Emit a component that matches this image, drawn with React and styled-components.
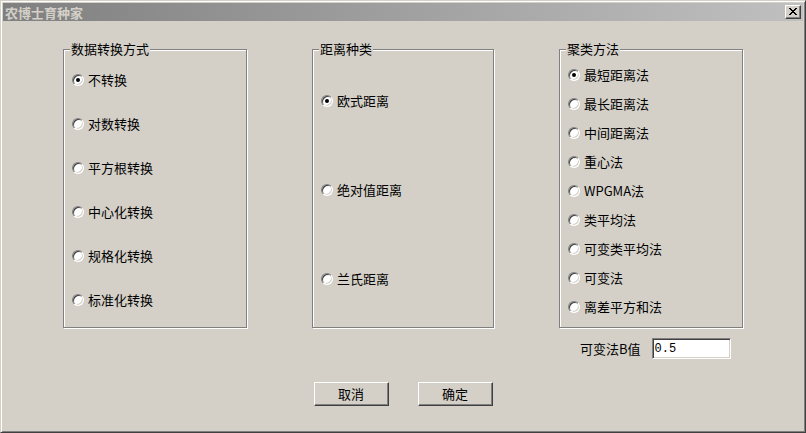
import React from "react";
import styled, { createGlobalStyle } from "styled-components";

const Global = createGlobalStyle`
  html, body { margin: 0; padding: 0; background: #d4d0c8; }
  body { font-family: "SimSun", "Noto Sans CJK SC", "Noto Sans", sans-serif; }
  * { box-sizing: border-box; }
`;

const Window = styled.div`
  width: 806px;
  height: 433px;
  background: #d4d0c8;
  border: 1px solid;
  border-color: #d4d0c8 #404040 #404040 #d4d0c8;
  box-shadow: inset 1px 1px 0 #fff, inset -1px -1px 0 #808080;
  padding: 2px;
  display: flex;
  flex-direction: column;
  font-size: 13px;
  color: #000;
`;

const TitleBar = styled.div`
  height: 18px;
  flex: none;
  display: flex;
  align-items: center;
  justify-content: space-between;
  padding: 0 2px 0 2px;
  background: linear-gradient(to right, #808080, #c0c0c0);
`;

const TitleText = styled.span`
  font-family: "Noto Sans CJK SC", sans-serif;
  font-weight: 700;
  font-size: 13px;
  line-height: 13px;
  color: #d4d0c8;
`;

const CloseBtn = styled.div`
  width: 16px;
  height: 14px;
  background: #d4d0c8;
  border: 1px solid;
  border-color: #fff #404040 #404040 #fff;
  box-shadow: inset -1px -1px 0 #808080;
  display: flex;
  align-items: center;
  justify-content: center;
  padding-bottom: 1px;
`;

const Content = styled.div`
  flex: 1;
  padding: 28px 0 0 60px;
  display: flex;
  flex-direction: column;
`;

const Columns = styled.div`
  display: grid;
  grid-template-columns: 184px 182px 184px;
  column-gap: 65px;
  align-items: start;
`;

const Column = styled.div`
  display: flex;
  flex-direction: column;
`;

const Group = styled.div`
  position: relative;
  height: 279px;
  border: 1px solid #808080;
  box-shadow: 1px 1px 0 #fff, inset 1px 1px 0 #fff;
  padding: ${(p) => p.$pad}px 0 0 8px;
  display: flex;
  flex-direction: column;
`;

const Legend = styled.span`
  position: absolute;
  top: -8px;
  left: 6px;
  padding: 0 1px;
  background: #d4d0c8;
  line-height: 14px;
  font-family: "Noto Sans CJK SC", sans-serif;
  font-size: 13px;
`;

const Row = styled.label`
  height: ${(p) => p.$h}px;
  display: flex;
  align-items: center;
  font-family: "Noto Sans CJK SC", sans-serif;
  font-size: 13px;
  line-height: 14px;
`;

const Radio = styled.span`
  position: relative;
  width: 12px;
  height: 12px;
  flex: none;
  margin-right: 4px;
  border-radius: 50%;
  border: 1px solid;
  border-color: #808080 #fff #fff #808080;
  box-shadow: inset 1px 1px 0 #404040, inset -1px -1px 0 #d4d0c8;
  background: #fff;
  &::after {
    content: "";
    display: ${(p) => (p.$on ? "block" : "none")};
    position: absolute;
    left: 3px;
    top: 3px;
    width: 4px;
    height: 4px;
    border-radius: 50%;
    background: #000;
  }
`;

const ParamRow = styled.div`
  margin-top: 10px;
  display: flex;
  align-items: center;
  gap: 11px;
  padding-left: 21px;
`;

const ParamLabel = styled.span`
  font-family: "Noto Sans CJK SC", sans-serif;
  font-size: 13px;
  line-height: 14px;
`;

const Input = styled.div`
  width: 79px;
  height: 21px;
  background: #fff;
  border: 1px solid;
  border-color: #808080 #fff #fff #808080;
  box-shadow: inset 1px 1px 0 #404040, inset -1px -1px 0 #d4d0c8;
  padding: 0 0 0 2px;
  display: flex;
  align-items: center;
  font-family: "Liberation Mono", monospace;
  font-size: 12px;
`;

const ButtonRow = styled.div`
  margin-top: 23px;
  margin-left: -60px;
  display: flex;
  justify-content: center;
  gap: 29px;
`;

const Button = styled.div`
  width: 75px;
  height: 24px;
  border: 1px solid;
  border-color: #fff #404040 #404040 #fff;
  box-shadow: inset -1px -1px 0 #808080;
  display: flex;
  align-items: center;
  justify-content: center;
  font-family: "Noto Sans CJK SC", sans-serif;
  font-size: 13px;
  padding-bottom: 1px;
`;

const groups = [
  {
    title: "数据转换方式",
    pad: 8,
    h: 44,
    items: ["不转换", "对数转换", "平方根转换", "中心化转换", "规格化转换", "标准化转换"],
  },
  {
    title: "距离种类",
    pad: 6,
    h: 89,
    items: ["欧式距离", "绝对值距离", "兰氏距离"],
  },
  {
    title: "聚类方法",
    pad: 10,
    h: 29,
    items: [
      "最短距离法",
      "最长距离法",
      "中间距离法",
      "重心法",
      "WPGMA法",
      "类平均法",
      "可变类平均法",
      "可变法",
      "离差平方和法",
    ],
  },
];

function RadioGroup({ g }) {
  return (
    <Group $pad={g.pad}>
      <Legend>{g.title}</Legend>
      {g.items.map((t, i) => (
        <Row key={t} $h={g.h}>
          <Radio $on={i === 0} />
          {t}
        </Row>
      ))}
    </Group>
  );
}

export default function App() {
  return (
    <>
      <Global />
      <Window>
        <TitleBar>
          <TitleText>农博士育种家</TitleText>
          <CloseBtn>
            <svg width="8" height="7" viewBox="0 0 8 7" shapeRendering="crispEdges">
              <path d="M0 0h2v1h-2zM6 0h2v1h-2zM1 1h2v1h-2zM5 1h2v1h-2zM2 2h4v1h-4zM3 3h2v1h-2zM2 4h4v1h-4zM1 5h2v1h-2zM5 5h2v1h-2zM0 6h2v1h-2zM6 6h2v1h-2z" fill="#000" />
            </svg>
          </CloseBtn>
        </TitleBar>
        <Content>
          <Columns>
            <Column>
              <RadioGroup g={groups[0]} />
            </Column>
            <Column>
              <RadioGroup g={groups[1]} />
            </Column>
            <Column>
              <RadioGroup g={groups[2]} />
              <ParamRow>
                <ParamLabel>可变法B值</ParamLabel>
                <Input>0.5</Input>
              </ParamRow>
            </Column>
          </Columns>
          <ButtonRow>
            <Button>取消</Button>
            <Button>确定</Button>
          </ButtonRow>
        </Content>
      </Window>
    </>
  );
}
